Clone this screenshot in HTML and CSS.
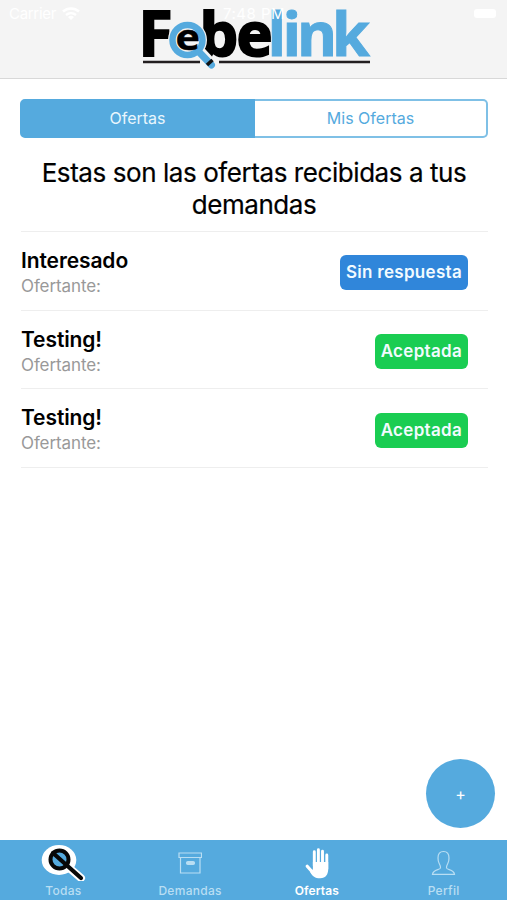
FILE: index.html
```html
<!DOCTYPE html>
<html lang="es">
<head>
    <meta charset="UTF-8">
    <meta name="viewport" content="width=device-width, initial-scale=1.0">
    <title>Febelink - Ofertas</title>
    <link rel="stylesheet" href="styles.css">
</head>
<body>
    <header class="header">
        <svg class="logo" width="234" height="72" viewBox="140 0 234 72">
            <g class="logo-text">
                <text x="138.500" y="56" font-size="62">F</text>
                <text x="199.500 236.500" y="56" font-size="61">be</text>
                <text class="logo-blue" x="267.500 282.500 297 332" y="56" font-size="61">link</text>
            </g>
            <path d="M143 62h57M219 62h151" stroke="#231f20" stroke-width="2.6"/>
            <path d="M200 51l12 13" stroke="#f4f4f4" stroke-width="10"/>
            <circle cx="187.500" cy="40" r="19.500" fill="#f4f4f4"/>
            <circle cx="187.500" cy="40" r="15" fill="#f4f4f4" stroke="#55aade" stroke-width="6.500"/>
            <path d="M199 52l12.500 13" stroke="#55aade" stroke-width="7" stroke-linecap="round"/>
            <path d="M207 65l5.500-5" stroke="#111" stroke-width="3.500"/>
            <text class="logo-e" x="175.500" y="50" font-size="36" textLength="24.500" lengthAdjust="spacingAndGlyphs">e</text>
        </svg>
        <div class="status">
            <span class="carrier">Carrier</span>
            <svg class="wifi" width="18" height="13" viewBox="0 0 18 13">
                <path d="M1 4.500a12 12 0 0 1 16 0M4 8a8 8 0 0 1 10 0" fill="none" stroke="#fff" stroke-width="2.500"/>
                <path d="M6 10a4.500 4.500 0 0 1 6 0l-3 3z" fill="#fff"/>
            </svg>
            <span class="time">7:48 PM</span>
            <span class="battery"></span>
        </div>
    </header>

    <main class="content">
        <div class="segment">
            <div class="segment-item active"><span>Ofertas</span></div>
            <div class="segment-item"><span>Mis Ofertas</span></div>
        </div>
        <h1 class="title">Estas son las ofertas recibidas a tus demandas</h1>
        <ul class="list">
            <li class="item">
                <div>
                    <h2 class="item-title">Interesado</h2>
                    <p class="item-sub">Ofertante:</p>
                </div>
                <span class="badge pending">Sin respuesta</span>
            </li>
            <li class="item">
                <div>
                    <h2 class="item-title">Testing!</h2>
                    <p class="item-sub">Ofertante:</p>
                </div>
                <span class="badge accepted">Aceptada</span>
            </li>
            <li class="item">
                <div>
                    <h2 class="item-title">Testing!</h2>
                    <p class="item-sub">Ofertante:</p>
                </div>
                <span class="badge accepted">Aceptada</span>
            </li>
        </ul>
    </main>

    <button class="add-button">+</button>

    <nav class="tabbar">
        <div class="tab">
            <svg width="46" height="38" viewBox="41 843 46 38">
                <path d="M68 866l14 12" stroke="#fff" stroke-width="8" stroke-linecap="round"/>
                <ellipse cx="60" cy="860" rx="17.300" ry="15" fill="#fff"/>
                <circle cx="60.500" cy="859.500" r="9" fill="#55aade" stroke="#080808" stroke-width="4"/>
                <path d="M54 853l28 25" stroke="#080808" stroke-width="4.200" stroke-linecap="round"/>
            </svg>
            <span>Todas</span>
        </div>
        <div class="tab">
            <svg width="24" height="38" viewBox="178 843 24 38">
                <g fill="none" stroke="#b9def3" stroke-width="1.200">
                    <path d="M179 853h22.500v4.500H179zM180.500 857.500v15.500h19.500v-15.500"/>
                    <rect x="186.500" y="861.500" width="8" height="3" rx="1.500" fill="#b9def3"/>
                </g>
            </svg>
            <span>Demandas</span>
        </div>
        <div class="tab active">
            <svg width="26" height="38" viewBox="304 843 26 38">
                <g fill="none" stroke="#fff" stroke-width="2.900" stroke-linecap="round">
                    <path d="M314.300 851.800v14M318.400 849.800v15M322.500 851.200v15M326.800 855v14"/>
                    <path d="M307.200 866.200l5.600 6.300" stroke-width="3.200"/>
                </g>
                <path d="M312.900 862h15.300v7c0 5-2.200 9.300-8 9.300-5.500 0-7.500-2-10-6l2.700-3z" fill="#fff"/>
            </svg>
            <span>Ofertas</span>
        </div>
        <div class="tab">
            <svg width="26" height="38" viewBox="431 843 26 38">
                <path d="M440.500 868c.3-1.500-.2-2.500-1.300-4.500-1-1.600-1.200-3.500-1.200-5.500 0-3.800 2-6.500 5.500-6.500s5.500 2.700 5.500 6.500c0 2-.2 3.900-1.200 5.500-1.100 2-1.600 3-1.300 4.500.4 2 7.500 1.500 8 6.300h-22c.5-4.800 7.600-4.300 8-6.300z" fill="none" stroke="#b9def3" stroke-width="1.200"/>
            </svg>
            <span>Perfil</span>
        </div>
    </nav>
</body>
</html>
```
FILE: styles.css
```css
* {
    box-sizing: border-box;
}

body {
    margin: 0;
    height: 900px;
    overflow: hidden;
    display: flex;
    flex-direction: column;
    position: relative;
    font-family: Inter, "Liberation Sans", sans-serif;
    background-color: #fff;
    color: #000;
}

.header {
    position: relative;
    height: 79px;
    flex-shrink: 0;
    padding-left: 140px;
    background-color: #f4f4f4;
    border-bottom: 1px solid #d8d8d8;
}

.logo {
    display: block;
    overflow: visible;
}

.logo-text,
.logo-e {
    font-family: "Open Sans", sans-serif;
    font-weight: 700;
    stroke: #000;
    stroke-width: 2px;
}

.logo-e {
    stroke-width: 0.5px;
}

.logo-blue {
    fill: #55aade;
    stroke: #55aade;
    stroke-width: 1px;
}

/* status bar overlaps the logo */
.status {
    position: absolute;
    top: 4px;
    left: 9px;
    right: 11px;
    height: 18px;
    display: flex;
    align-items: center;
    color: #fff;
    font-size: 15px;
}

.carrier {
    width: 46px;
    letter-spacing: -0.3px;
}

.wifi {
    margin-left: 7px;
}

.time {
    margin-left: 143px;
    letter-spacing: 0.5px;
}

.battery {
    width: 22px;
    height: 9px;
    margin-left: auto;
    border-radius: 3px;
    background-color: #fff;
}

.content {
    flex: 1;
    padding: 20px 19px 0 20px;
}

.segment {
    display: flex;
    height: 39px;
}

.segment-item {
    flex: 1;
    display: flex;
    align-items: center;
    justify-content: center;
    padding-bottom: 2px;
    border: 2px solid #7fc0e6;
    border-left: none;
    border-radius: 0 5px 5px 0;
    color: #55aade;
    font-size: 16px;
}

.segment-item.active {
    border: 2px solid #55aade;
    border-radius: 5px 0 0 5px;
    background-color: #55aade;
    color: #e9f6fd;
}

.title {
    margin: 19px 0 10px;
    font-size: 26px;
    line-height: 32px;
    font-weight: 400;
    text-align: center;
    letter-spacing: -0.43px;
    -webkit-text-stroke: 0.2px #000;
}

.list {
    margin: 0 0 0 1px;
    padding: 0;
    list-style: none;
    border-top: 1.500px solid #eee;
}

.item {
    display: flex;
    align-items: center;
    justify-content: space-between;
    height: 78.700px;
    padding: 4px 20px 0 0;
    border-bottom: 1.500px solid #eee;
}

.item-title {
    margin: 0;
    font-size: 21px;
    line-height: 27px;
    font-weight: 600;
    letter-spacing: -0.1px;
}

.item-sub {
    margin: 0;
    font-size: 17px;
    line-height: 25px;
    color: #999;
    letter-spacing: -0.1px;
}

.badge {
    height: 35px;
    padding: 0 6px;
    border-radius: 6px;
    color: #f2fbff;
    font-size: 17px;
    font-weight: 600;
    line-height: 35px;
    letter-spacing: 0.3px;
}

.pending {
    background-color: #3086da;
}

.accepted {
    background-color: #1acd52;
}

.add-button {
    position: absolute;
    right: 12px;
    bottom: 72px;
    width: 69px;
    height: 69px;
    padding: 1px 0 0;
    border: none;
    border-radius: 50%;
    background-color: #55aade;
    color: #fff;
    font-family: inherit;
    font-size: 16px;
}

.tabbar {
    display: flex;
    height: 60px;
    flex-shrink: 0;
    background-color: #55aade;
}

.tab {
    flex: 1;
    display: flex;
    flex-direction: column;
    align-items: center;
    padding-top: 3px;
    color: #b9def3;
    font-size: 12px;
    font-weight: 500;
    line-height: 19px;
    letter-spacing: 0.3px;
}

.tab svg {
    flex-shrink: 0;
}

.tab.active {
    color: #fff;
    font-weight: 600;
    letter-spacing: 0.1px;
}
```
